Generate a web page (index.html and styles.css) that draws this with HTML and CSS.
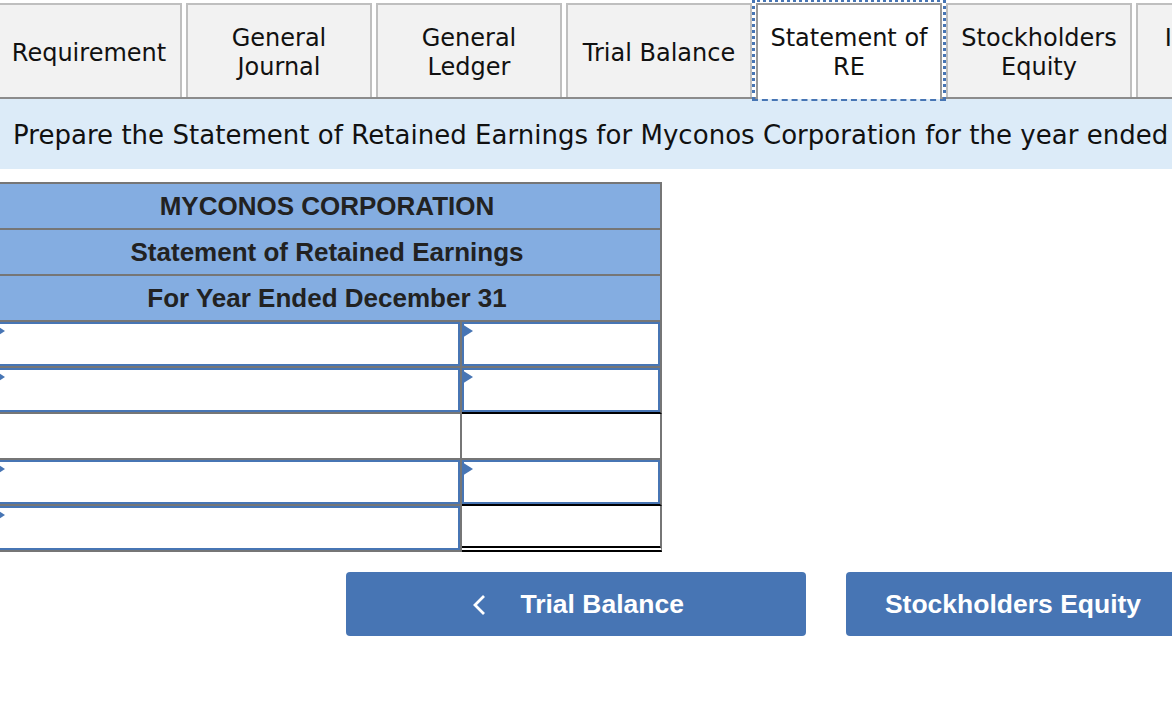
FILE: index.html
```html
<!DOCTYPE html>
<html lang="en">
<head>
    <meta charset="UTF-8">
    <meta name="viewport" content="width=device-width, initial-scale=1.0">
    <title>Statement of Retained Earnings</title>
    <link rel="stylesheet" href="styles.css">
</head>
<body>
    <div class="tabs">
        <div class="tab">Requirement</div>
        <div class="tab">General<br>Journal</div>
        <div class="tab">General<br>Ledger</div>
        <div class="tab">Trial Balance</div>
        <div class="tab active">Statement of<br>RE</div>
        <div class="tab">Stockholders<br>Equity</div>
        <div class="tab">Instruction<br>Notes</div>
    </div>

    <div class="instruction">Prepare the Statement of Retained Earnings for Myconos Corporation for the year ended December 31.</div>

    <table class="statement">
        <colgroup>
            <col class="label-col">
            <col>
        </colgroup>
        <tr><th colspan="2">MYCONOS CORPORATION</th></tr>
        <tr><th colspan="2">Statement of Retained Earnings</th></tr>
        <tr><th colspan="2">For Year Ended December 31</th></tr>
        <tr>
            <td><div class="field"></div></td>
            <td><div class="field"></div></td>
        </tr>
        <tr>
            <td><div class="field"></div></td>
            <td class="total"><div class="field"></div></td>
        </tr>
        <tr>
            <td></td>
            <td></td>
        </tr>
        <tr>
            <td><div class="field"></div></td>
            <td class="total"><div class="field"></div></td>
        </tr>
        <tr>
            <td><div class="field"></div></td>
            <td class="grand"></td>
        </tr>
    </table>

    <div class="nav-buttons">
        <button class="nav-btn prev">
            <svg class="chevron" width="14" height="22" viewBox="0 0 14 22"><path d="M12 2 L3 11 L12 20" fill="none" stroke="#fff" stroke-width="2.8"/></svg>
            Trial Balance
        </button>
        <button class="nav-btn next">Stockholders Equity</button>
    </div>
</body>
</html>
```

FILE: styles.css
```css
:root {
    --blue: #4775b4;
    --header: #84ade1;
    --line: #767676;
}

* {
    box-sizing: border-box;
    margin: 0;
    padding: 0;
}

html, body {
    height: 100%;
    overflow: hidden;
}

body {
    background-color: white;
    color: #111;
    font-family: 'DejaVu Sans', Verdana, sans-serif;
}

.tabs {
    display: flex;
    gap: 4px;
    height: 99px;
    margin-left: -4px;
    padding-top: 3px;
    border-bottom: 2px solid #8c8c8c;
}

.tab {
    position: relative;
    flex: 0 0 186px;
    height: 94px;
    padding-top: 4px;
    display: flex;
    align-items: center;
    justify-content: center;
    text-align: center;
    font-size: 24px;
    line-height: 29px;
    background-color: #f2f2f2;
    border: 2px solid #bfbfbf;
    border-bottom: none;
}

.tab.active {
    height: 96px;
    padding-top: 2px;
    background-color: white;
    border-color: #999;
}

.tab.active::after {
    content: "";
    position: absolute;
    top: -6px;
    left: -6px;
    right: -6px;
    bottom: -2px;
    border: 3px dotted var(--blue);
    border-bottom: 2px dashed var(--blue);
}

.instruction {
    height: 70px;
    padding: 0 13px;
    line-height: 73px;
    font-size: 26px;
    letter-spacing: 0.03px;
    white-space: nowrap;
    overflow: hidden;
    background-color: #dcebf8;
}

.statement {
    width: 670px;
    margin: 13px 0 0 -8px;
    border-collapse: separate;
    border-spacing: 0;
    table-layout: fixed;
    border-top: 2px solid var(--line);
    border-left: 2px solid var(--line);
}

.label-col {
    width: 468px;
}

.statement th {
    height: 46px;
    font-family: 'Liberation Sans', Arial, sans-serif;
    font-size: 26px;
    color: #222;
    background-color: var(--header);
    border-right: 2px solid var(--line);
    border-bottom: 2px solid var(--line);
}

.statement td {
    height: 46px;
    padding: 0;
    border-right: 2px solid var(--line);
    border-bottom: 2px solid var(--line);
}

.statement .total {
    border-bottom-color: #000;
}

.statement .grand {
    border-bottom: 6px double #000;
}

.field {
    position: relative;
    height: 44px;
    border: 2px solid var(--blue);
}

.field::before {
    content: "";
    position: absolute;
    top: 0;
    left: -2px;
    border-left: 11px solid var(--blue);
    border-top: 7px solid transparent;
    border-bottom: 7px solid transparent;
}

.nav-buttons {
    display: flex;
    gap: 40px;
    margin: 20px 0 0 346px;
}

.nav-btn {
    flex: none;
    height: 64px;
    border: none;
    border-radius: 4px;
    background-color: var(--blue);
    color: white;
    font-family: 'Liberation Sans', Arial, sans-serif;
    font-size: 26.5px;
    font-weight: bold;
}

.prev {
    width: 460px;
    padding-left: 4px;
}

.chevron {
    margin-right: 27px;
    vertical-align: -3px;
}

.next {
    width: 334px;
}
```
